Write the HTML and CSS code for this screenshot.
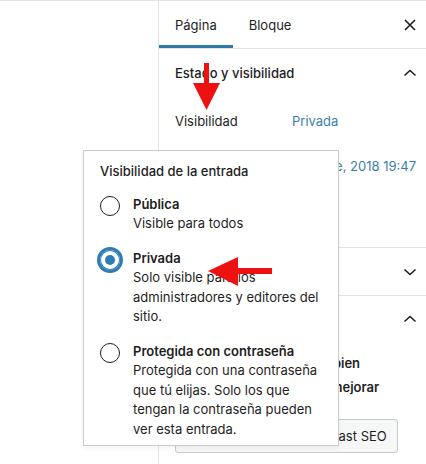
FILE: index.html
```html
<!DOCTYPE html>
<html>
<head>
  <meta charset="utf-8">
  <title>Visibilidad de la entrada</title>
  <link rel="stylesheet" href="styles.css">
</head>
<body>
  <div class="screen">
    <div class="canvas"></div>

    <!-- barra lateral del editor -->
    <aside class="sidebar">
      <div class="tabs">
        <button class="tab active">Página</button>
        <button class="tab">Bloque</button>
        <button class="close" aria-label="Cerrar">
          <svg width="24" height="24" viewBox="0 0 24 24"><path d="M7 7l10 10M17 7L7 17" fill="none" stroke="#1e1e1e" stroke-width="1.6"/></svg>
        </button>
      </div>

      <section class="panel">
        <div class="panel-head">
          <span>Estado y visibilidad</span>
          <svg width="24" height="24" viewBox="0 0 24 24"><path d="M6.5 14.5l5.5-5 5.5 5" fill="none" stroke="#1e1e1e" stroke-width="1.6"/></svg>
        </div>
        <div class="panel-body status">
          <div class="row"><span class="label">Visibilidad</span><a class="value">Privada</a></div>
          <div class="row date"><span class="label">Publicar</span><a class="value">diciembre, 2018 19:47</a></div>
        </div>
      </section>

      <section class="panel">
        <div class="panel-head">
          <span>Enlace permanente</span>
          <svg width="24" height="24" viewBox="0 0 24 24"><path d="M6.5 9.5l5.5 5 5.5-5" fill="none" stroke="#1e1e1e" stroke-width="1.6"/></svg>
        </div>
      </section>

      <section class="panel">
        <div class="panel-head short">
          <span>Yoast SEO</span>
          <svg width="24" height="24" viewBox="0 0 24 24"><path d="M6.5 14.5l5.5-5 5.5 5" fill="none" stroke="#1e1e1e" stroke-width="1.6"/></svg>
        </div>
        <div class="panel-body seo">
          <p class="score">Análisis de la legibilidad: bien</p>
          <p class="score">El análisis SEO: necesita mejorar</p>
          <button class="seo-btn">Mejorar la página con Yoast SEO</button>
        </div>
      </section>
    </aside>

    <!-- ventana emergente de visibilidad -->
    <div class="popover">
      <div class="popover-title">Visibilidad de la entrada</div>
      <div class="option">
        <span class="radio"></span>
        <div class="option-text">
          <div class="option-name">Pública</div>
          <div class="option-desc">Visible para todos</div>
        </div>
      </div>
      <div class="option">
        <span class="radio checked"></span>
        <div class="option-text">
          <div class="option-name">Privada</div>
          <div class="option-desc">Solo visible para los administradores y editores del sitio.</div>
        </div>
      </div>
      <div class="option">
        <span class="radio"></span>
        <div class="option-text">
          <div class="option-name">Protegida con contraseña</div>
          <div class="option-desc">Protegida con una contraseña que tú elijas. Solo los que tengan la contraseña pueden ver esta entrada.</div>
        </div>
      </div>
    </div>

    <!-- flechas de anotación -->
    <svg class="arrows" width="426" height="464" viewBox="0 0 426 464">
      <rect x="204" y="63" width="5" height="22" fill="#ee1111"/>
      <polygon points="193,83 220,83 206.5,110" fill="#ee1111"/>
      <rect x="236" y="268" width="36" height="6" fill="#ee1111"/>
      <polygon points="208,271 238,257 238,286" fill="#ee1111"/>
    </svg>
  </div>
</body>
</html>
```

FILE: styles.css
```css
/* base */
html, body {
  margin: 0;
  padding: 0;
  background: #fff;
  font-family: Inter, "Noto Sans", sans-serif;
  font-size: 13px;
  color: #1e1e1e;
}

.screen {
  position: relative;
  display: flex;
  height: 463px;
  border-top: 1px solid #e2e4e7;
  overflow: hidden;
}

.canvas {
  width: 158px;
  flex: none;
}

.sidebar {
  flex: 1;
  min-width: 0;
  overflow: hidden;
  border-left: 1px solid #e2e4e7;
}

/* pestañas */
.tabs {
  display: flex;
  align-items: center;
  height: 47px;
  border-bottom: 1px solid #e2e4e7;
}

.tab {
  height: 47px;
  padding: 0 16px;
  border: none;
  background: none;
  font: inherit;
  color: #1e1e1e;
}

.tab.active {
  box-shadow: inset 0 -3px 0 #2e7aa3;
}

.close {
  margin-left: auto;
  margin-right: 4px;
  width: 24px;
  height: 24px;
  padding: 0;
  border: none;
  background: none;
}

.close svg, .panel-head svg {
  display: block;
  flex: none;
}

/* paneles */
.panel {
  border-bottom: 1px solid #e2e4e7;
}

.panel-head {
  display: flex;
  align-items: center;
  justify-content: space-between;
  height: 47px;
  padding: 0 4px 0 16px;
  font-weight: 500;
}

.panel-head.short {
  height: 46px;
}

.panel-body {
  padding: 0 16px;
}

.status {
  padding-top: 2px;
  padding-bottom: 59px;
}

.row {
  display: flex;
  align-items: center;
  height: 45px;
  white-space: nowrap;
}

.label {
  width: 117px;
  flex: none;
}

.value {
  color: #3b7fa8;
}

.date .label {
  width: auto;
  flex: 1;
  min-width: 0;
  overflow: hidden;
}

.date .value {
  flex: none;
  margin-right: -6px;
}

.seo {
  padding-top: 9px;
  padding-bottom: 20px;
}

.score {
  margin: 0;
  line-height: 24px;
  font-weight: 600;
  white-space: nowrap;
}

.seo-btn {
  margin-top: 20px;
  height: 34px;
  padding: 0 10px;
  border: 1px solid #c8c8c8;
  border-radius: 3px;
  background: #f6f7f7;
  font: inherit;
  color: #1e1e1e;
  white-space: nowrap;
}

/* ventana emergente */
.popover {
  position: absolute;
  left: 83px;
  top: 149px;
  width: 256px;
  box-sizing: border-box;
  padding: 11px 16px 6px;
  background: #fff;
  border: 1px solid #cccccc;
  box-shadow: 0 2px 6px rgba(0, 0, 0, 0.05);
  line-height: 19.5px;
}

.popover-title {
  font-weight: 500;
  margin-bottom: 13px;
}

.option {
  display: flex;
  align-items: flex-start;
  gap: 13px;
  margin-bottom: 15px;
}

.option:last-child {
  margin-bottom: 0;
}

.option-name {
  font-weight: 600;
}

.radio {
  flex: none;
  width: 20px;
  height: 20px;
  margin-top: 1px;
  box-sizing: border-box;
  border: 1.5px solid #1e1e1e;
  border-radius: 50%;
}

.radio.checked {
  position: relative;
  border: none;
  box-shadow: 0 0 0 3px #2f7db3, inset 0 0 0 1px #2f7db3;
}

.radio.checked::after {
  content: '';
  position: absolute;
  left: 5px;
  top: 5px;
  width: 10px;
  height: 10px;
  border-radius: 50%;
  background: #2f7db3;
}

/* anotaciones */
.arrows {
  position: absolute;
  left: 0;
  top: -1px;
  pointer-events: none;
}
```
